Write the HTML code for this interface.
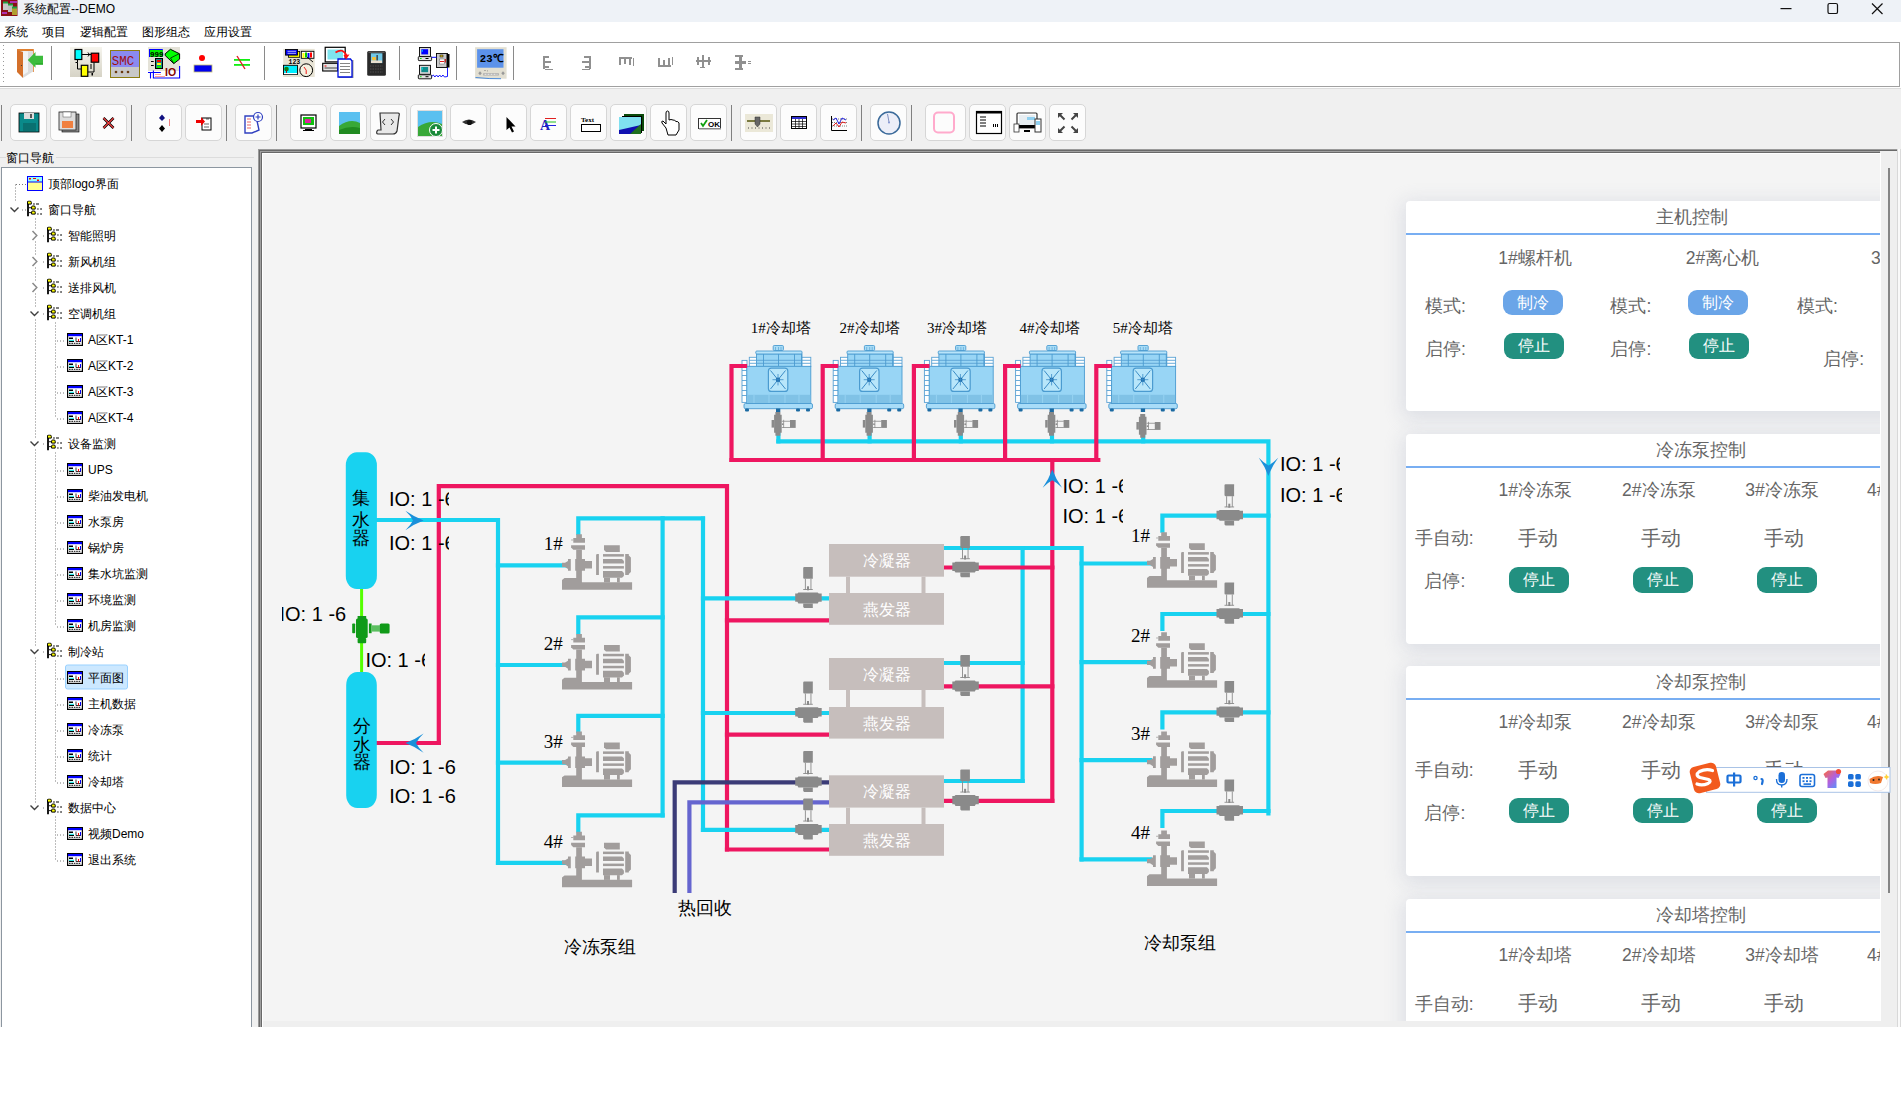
<!DOCTYPE html>
<html><head><meta charset="utf-8">
<style>
*{box-sizing:border-box}
html,body{margin:0;padding:0;width:1901px;height:1108px;overflow:hidden;background:#fff;font-family:"Liberation Sans",sans-serif;color:#000}
.a{position:absolute}
#title{left:0;top:0;width:1901px;height:22px;background:#eef2f7}
#menu{left:0;top:22px;width:1901px;height:20px;background:#fff;font-size:12px}
#menu span{position:absolute;top:2px;line-height:16px}
#tb1{left:0;top:42px;width:1900px;height:45px;background:#fff;border-top:1px solid #a0a0a0;border-bottom:1px solid #a0a0a0;border-right:1px solid #a0a0a0}
#main{left:0;top:87px;width:1901px;height:940px;background:#f0f0f0;border-top:1px solid #fff}
#main2{left:0;top:88px;width:1901px;height:1px;background:#dcdcdc}
.btn{position:absolute;top:104px;width:37px;height:37px;border:1px solid #d4d4d4;border-radius:4px;background:#fbfbfb}
.sep{position:absolute;width:1px;background:#8a8a8a}
#tree{left:1px;top:167px;width:251px;height:860px;background:#fff;border:1px solid #8c96a0;border-bottom:none}
#grp{left:0;top:157px;width:254px;height:1px;background:#dcdcdc}
.ti{position:absolute;font-size:12px;line-height:16px;white-space:nowrap;margin-top:0.7px;font-weight:500}
#canvas{left:258px;top:150px;width:1643px;height:877px;background:#f0f0f0}
.card{position:absolute;left:1406px;width:520px;background:#fff;border-radius:4px;box-shadow:0 4px 18px 4px rgba(195,200,212,0.45)}
.card .hd{position:absolute;left:0;top:0;width:474px;height:33px;border-bottom:2px solid #78aef2}
.ct{position:absolute;font-size:17px;color:#555;white-space:nowrap;line-height:20px}
.pill{position:absolute;width:60px;height:26px;border-radius:9px;color:#fff;font-size:16px;font-weight:500;text-align:center;line-height:26px}
.pb{background:#6aa5e8}
.pg{background:#229080}
.io{position:absolute;font-size:20px;line-height:20px;white-space:nowrap;overflow:hidden;color:#000}
</style></head><body>
<div id="title" class="a">
<svg class="a" style="left:1px;top:0" width="17" height="17" viewBox="0 0 17 17"><rect x="0" y="0" width="16.5" height="16" fill="#8a0f14"/><rect x="9" y="1" width="7" height="2" fill="#b030b0"/><rect x="1" y="12" width="5" height="2" fill="#b030b0"/><rect x="2" y="2" width="5" height="8" fill="#c8c8c8"/><rect x="2" y="1.5" width="5" height="2" fill="#20a040"/><rect x="7" y="4" width="5" height="8" fill="#c0c0c0"/><rect x="7" y="3.5" width="5" height="2" fill="#20a040"/><rect x="11" y="7" width="5" height="8" fill="#b0a030"/><rect x="11" y="6.5" width="5" height="2" fill="#20a040"/></svg>
<span class="a" style="left:23px;top:2px;font-size:12px;line-height:15px;color:#000">系统配置--DEMO</span>
<svg class="a" style="left:1778px;top:2px" width="120" height="14" viewBox="0 0 120 14"><rect x="2.5" y="6" width="11" height="1.2" fill="#111"/><rect x="50" y="1.5" width="9.5" height="10" rx="1.6" fill="none" stroke="#111" stroke-width="1.2"/><path d="M94 1.5 L104.5 12 M104.5 1.5 L94 12" stroke="#111" stroke-width="1.2"/></svg>
</div>
<div id="menu" class="a">
<span style="left:4px">系统</span><span style="left:42px">项目</span><span style="left:80px">逻辑配置</span><span style="left:142px">图形组态</span><span style="left:204px">应用设置</span>
</div>
<div id="tb1" class="a"></div>
<svg class="a" style="left:0;top:43px" width="760" height="42" viewBox="0 43 760 42">
<!-- grip -->
<g fill="#9a9a9a"><rect x="3" y="45" width="1" height="1"/><rect x="3" y="49" width="1" height="1"/><rect x="3" y="53" width="1" height="1"/><rect x="3" y="57" width="1" height="1"/><rect x="3" y="61" width="1" height="1"/><rect x="3" y="65" width="1" height="1"/><rect x="3" y="69" width="1" height="1"/><rect x="3" y="73" width="1" height="1"/><rect x="3" y="77" width="1" height="1"/><rect x="3" y="81" width="1" height="1"/></g>
<!-- door -->
<rect x="17" y="49" width="16.8" height="23" fill="#e08030"/><rect x="18.5" y="51" width="14.5" height="21" fill="#e4e4e4"/>
<path d="M23 52 L33 51.5 V71.5 L23 78Z" fill="#dcdcdc"/><path d="M23 51 L28 51.5 V72 L23 75Z" fill="#f2f2f2"/>
<path d="M17 50 L23 52 V78 L17 72Z" fill="#d4702a"/><circle cx="21.5" cy="65.5" r="0.6" fill="#333"/>
<path d="M27.8 60.1 L35.5 52 V55.8 H43 V64.6 H35.5 V67.7Z" fill="#3cbc3c"/><path d="M35.5 63.5 H43 V64.6 H35.5Z" fill="#1aa01a"/>
<rect x="51" y="46" width="1" height="34" fill="#8a8a8a"/>
<!-- icon1 -->
<defs><linearGradient id="ic1g" x1="0" y1="0" x2="0" y2="1"><stop offset="0" stop-color="#f6f5ee"/><stop offset="1" stop-color="#d6d3c6"/></linearGradient></defs>
<rect x="70" y="47" width="32" height="30" fill="url(#ic1g)"/>
<rect x="75" y="49.5" width="6.8" height="10" fill="#00ffff" stroke="#000" stroke-width="1.2"/>
<rect x="91.2" y="53.2" width="7.5" height="9" fill="#ff0000" stroke="#000" stroke-width="1.2"/>
<rect x="81.3" y="65.3" width="6.5" height="11" fill="#ffff00" stroke="#000" stroke-width="1.2"/>
<path d="M82 54.5 H91 M88 52.5 L89.5 54.5 L88 56.5 M77.5 60 V62.5 H75.5 M77.5 62.5 V69 H81 M94 62.5 V72 H88 M91 64 V69" stroke="#000" stroke-width="1" fill="none"/>
<rect x="91.5" y="73" width="1.5" height="2.5" fill="#000"/>
<!-- SMC -->
<rect x="110.5" y="50.5" width="29" height="27" fill="#c8c8c8" stroke="#8b7b10"/><rect x="111" y="51" width="28" height="16" fill="#8a8af0"/>
<text x="111.8" y="64.5" font-size="12" fill="#a01010" font-family="Liberation Mono" textLength="22.5" lengthAdjust="spacingAndGlyphs">SMC</text>
<circle cx="116" cy="72" r="1.3" fill="#6a3a10"/><circle cx="122" cy="72" r="1.3" fill="#6a3a10"/><circle cx="128" cy="72" r="1.3" fill="#6a3a10"/>
<!-- IO icon -->
<rect x="148" y="47" width="32" height="24" fill="#e4e2d8"/>
<rect x="149" y="49" width="13.8" height="8" fill="#0000ff"/><rect x="150" y="50" width="12.8" height="6.9" fill="#00ee00"/>
<text x="150" y="56.5" font-size="7.5" font-weight="bold" font-family="Liberation Mono" fill="#000">999</text>
<path d="M165.2 53.8 L170.4 49.3 L179.6 53.8 V59.1 L173.8 63.6 L165.2 55.5Z" fill="#00ff00" stroke="#000" stroke-width="1"/><path d="M170.5 58 L179 53.8 M170.5 58 L173.8 63.5" stroke="#000" stroke-width="0.7"/>
<rect x="155.5" y="58.5" width="7" height="10" fill="#1a8a8a" stroke="#000" stroke-width="1"/><rect x="157" y="60" width="4" height="2" fill="#f00"/><rect x="157" y="63" width="4" height="2" fill="#ff0"/><rect x="157" y="66" width="4" height="2" fill="#0e0"/>
<rect x="151" y="61" width="2.7" height="1" fill="#000"/><rect x="151" y="65" width="2.7" height="1" fill="#000"/>
<path d="M148 72.5 H160.8 M150.5 72.5 V78.6 M153.4 70.5 V78 H179.6 V66" stroke="#0000ff" stroke-width="1.1" fill="none"/>
<text x="165" y="76" font-size="10.5" font-family="Liberation Sans" fill="#800000" font-weight="bold">IO</text>
<g fill="#f00"><circle cx="156" cy="74.5" r="0.5"/><circle cx="158" cy="74.5" r="0.5"/><circle cx="160" cy="74.5" r="0.5"/><circle cx="156" cy="76.4" r="0.5"/><circle cx="158" cy="76.4" r="0.5"/><circle cx="160" cy="76.4" r="0.5"/><circle cx="162" cy="76.4" r="0.5"/><circle cx="164" cy="76.4" r="0.5"/></g>
<!-- red dot blue bar -->
<circle cx="202" cy="58" r="3" fill="#f00"/><rect x="194" y="65" width="18" height="7" fill="#0000ee" stroke="#c8c070" stroke-width="0.8"/>
<!-- green lines red slash -->
<rect x="234" y="59" width="16" height="1.8" fill="#11ee11"/><rect x="234" y="64" width="16" height="1.8" fill="#11ee11"/><path d="M237 56 L245 69" stroke="#e02020" stroke-width="1.4"/>
<rect x="264" y="46" width="1" height="34" fill="#8a8a8a"/>
<!-- icon 283 -->
<rect x="283.2" y="48.9" width="31.5" height="28.1" fill="#e8e4d6"/>
<rect x="288.4" y="51.5" width="11.3" height="5.8" fill="#ffff00" stroke="#000" stroke-width="0.8"/>
<rect x="285.5" y="49.5" width="12" height="5.6" fill="#0000ee" stroke="#000" stroke-width="0.9"/><path d="M287.5 51.3 H296 M287.5 53.3 H296" stroke="#fff" stroke-width="0.7"/>
<rect x="301.3" y="51.3" width="12.6" height="7" fill="#fff" stroke="#000" stroke-width="0.9"/><rect x="302.5" y="53" width="2" height="5" fill="#ff0"/><rect x="305" y="52.5" width="2" height="5" fill="#0c0"/><rect x="307.5" y="53" width="2" height="5" fill="#00f"/><rect x="310" y="52.5" width="2" height="5" fill="#f00"/>
<path d="M307 57 L313 62" stroke="#000" stroke-width="0.9"/>
<text x="288.5" y="63.8" font-size="6.5" font-weight="bold" font-family="Liberation Mono" fill="#000">123</text>
<rect x="283.5" y="65.3" width="14" height="9.2" fill="#00eeff" stroke="#000" stroke-width="0.9"/><circle cx="286.5" cy="69" r="2.3" fill="#108010"/><rect x="286" y="70" width="1" height="4" fill="#902020"/><rect x="284" y="73" width="13" height="1.2" fill="#fff"/>
<circle cx="306.2" cy="70.2" r="6.4" fill="#f4f0e0" stroke="#000" stroke-width="1"/><path d="M304 67 L306.2 70.2 V74" stroke="#e00" stroke-width="0.9" fill="none"/>
<!-- computer disk -->
<rect x="325.2" y="47.3" width="20" height="14.6" fill="#fff" stroke="#000" stroke-width="1.2"/><rect x="327.5" y="49.5" width="15.5" height="10" fill="#7ee4ee"/>
<rect x="322.7" y="63.3" width="15" height="7.7" fill="#e4e4e4" stroke="#000" stroke-width="1.1"/><rect x="324.5" y="65.5" width="2" height="1" fill="#e00"/><path d="M324.5 68 H337" stroke="#000" stroke-width="0.7"/>
<rect x="339" y="60" width="14.5" height="18" fill="#999"/>
<path d="M338 59 H350.5 L352 61 V77 H338Z" fill="#fff" stroke="#0010e0" stroke-width="1.3"/><path d="M340 63.5 H350 M340 66.5 H350 M340 69.5 H350 M340 72.5 H350" stroke="#333" stroke-width="0.6"/>
<path d="M335.5 52.5 Q343 47.5 346.5 55.5" stroke="#ff1010" stroke-width="1.8" fill="none"/><path d="M343.5 55 L349.5 54.5 L346 59.5Z" fill="#ff1010"/>
<!-- pda -->
<rect x="367.2" y="51" width="18.7" height="24.8" rx="1.5" fill="#2a2a2a"/><rect x="368.5" y="51.5" width="16" height="1.5" fill="#555"/>
<rect x="370.9" y="53.3" width="11.5" height="9.8" fill="#70c8e8"/><rect x="372" y="57" width="4" height="3.5" fill="#f0c040"/><rect x="376.5" y="55" width="1.3" height="7" fill="#333"/><rect x="371" y="60.5" width="11" height="2.5" fill="#e8e0d0"/>
<path d="M370 66 H383 M370 69 H383 M370 72 H383" stroke="#666" stroke-width="0.6" stroke-dasharray="1.5 1"/>
<rect x="399" y="46" width="1" height="34" fill="#8a8a8a"/>
<!-- network -->
<rect x="419.5" y="47.5" width="11" height="9" fill="#d8d8d8" stroke="#000" stroke-width="0.9"/><rect x="421.3" y="49.2" width="6.8" height="5.2" fill="#0000ff"/><rect x="421.8" y="49.8" width="0.8" height="2" fill="#0ff"/>
<rect x="418.3" y="56.6" width="13.3" height="4" rx="0.8" fill="#e4e4e4" stroke="#000" stroke-width="0.9"/><rect x="420" y="58" width="1.6" height="1" fill="#0d0"/><rect x="425.5" y="58" width="3" height="1" fill="#000"/>
<rect x="419.5" y="65.3" width="11" height="9" fill="#d8d8d8" stroke="#000" stroke-width="0.9"/><rect x="421.3" y="67" width="6.8" height="5.2" fill="#108c8c"/><rect x="421.8" y="67.6" width="0.8" height="2" fill="#0ff"/>
<rect x="418.3" y="74.8" width="13.3" height="4" rx="0.8" fill="#e4e4e4" stroke="#000" stroke-width="0.9"/><rect x="420" y="76.2" width="1.6" height="1" fill="#0d0"/><rect x="425.5" y="76.2" width="3" height="1" fill="#000"/>
<rect x="436.5" y="53.5" width="11" height="14" fill="#c8c8c8" stroke="#000" stroke-width="0.9"/><rect x="446.5" y="54" width="3" height="13.5" fill="#000"/><rect x="440" y="55" width="3" height="2" fill="#e0c020" stroke="#000" stroke-width="0.5"/>
<rect x="439.5" y="59" width="5" height="5" fill="#fff" stroke="#666" stroke-width="0.5"/><path d="M440 61.5 H444" stroke="#d00" stroke-width="0.9"/><rect x="444.8" y="59" width="1" height="3.5" fill="#c00"/>
<path d="M431.7 57.3 H436.5" stroke="#0000ff" stroke-width="1"/>
<path d="M431.7 76.5 L433.3 75 L434.9 77 L436.5 75 L438.1 77 L439.7 75 L441.3 77 L442.9 75 L444.5 77 L447.5 76.5 V67.7" stroke="#0000ff" stroke-width="0.9" fill="none"/>
<rect x="456" y="46" width="1" height="34" fill="#8a8a8a"/>
<!-- 23C -->
<rect x="475.1" y="47.2" width="31.5" height="31.5" fill="#e2dfd2"/><rect x="477.1" y="49.2" width="26.4" height="18.5" fill="#5c92ea"/>
<text x="479.8" y="62" font-size="11" font-weight="bold" fill="#000" font-family="Liberation Mono" textLength="23.4" lengthAdjust="spacingAndGlyphs">23℃</text>
<rect x="484.5" y="70" width="1" height="1" fill="#777"/><rect x="487" y="70.5" width="0.8" height="0.8" fill="#777"/>
<path d="M480 71.2 L481.8 73.2 L480 75.2 L478.3 73.2Z" fill="#999"/><path d="M503 71.2 L504.8 73.2 L503 75.2 L501.3 73.2Z" fill="#999"/>
<rect x="483.2" y="73.2" width="15.6" height="2.3" fill="#aaa"/><path d="M484.5 74.3 H497.5" stroke="#fff" stroke-width="0.8" stroke-dasharray="2 1"/>
<path d="M475.5 77.5 Q490 79 501 78.7" stroke="#4a8ad8" stroke-width="1" fill="none"/>
<rect x="513" y="46" width="1" height="34" fill="#8a8a8a"/>
<!-- align icons -->
<g fill="#909090">
<rect x="543" y="56" width="2" height="13"/><rect x="545" y="56" width="4" height="2"/><rect x="545" y="61" width="6" height="2"/><rect x="545" y="66" width="4" height="2"/><rect x="545" y="69" width="8" height="1"/>
<rect x="589" y="56" width="2" height="13"/><rect x="584" y="56" width="5" height="2"/><rect x="582" y="61" width="7" height="2"/><rect x="585" y="66" width="4" height="2"/><rect x="582" y="69" width="8" height="1"/>
<rect x="619" y="57" width="13" height="2"/><rect x="619" y="59" width="2" height="6"/><rect x="624" y="59" width="2" height="5"/><rect x="629" y="59" width="2" height="6"/><rect x="633" y="58" width="1" height="8"/>
<rect x="658" y="65" width="13" height="2"/><rect x="658" y="58" width="2" height="7"/><rect x="663" y="60" width="2" height="5"/><rect x="668" y="58" width="2" height="7"/><rect x="672" y="57" width="1" height="8"/>
<rect x="696" y="60" width="15" height="2"/><rect x="697" y="57" width="2" height="8"/><rect x="702" y="55" width="2" height="12"/><rect x="708" y="57" width="2" height="8"/><rect x="700" y="67" width="5" height="1"/>
<rect x="739" y="55" width="3" height="15"/><rect x="735" y="55" width="8" height="2"/><rect x="735" y="61" width="11" height="3"/><rect x="735" y="68" width="8" height="2"/><rect x="748" y="61" width="3" height="1"/><rect x="748" y="63" width="3" height="1"/>
</g>
</svg>
<div id="main" class="a"></div><div id="main2" class="a"></div>
<svg class="a" style="left:0;top:95px" width="1100" height="55" viewBox="0 95 1100 55">
<rect x="10.5" y="104.5" width="36" height="36" rx="4.5" fill="#fcfcfc" stroke="#d6d6d6"/><rect x="50.5" y="104.5" width="36" height="36" rx="4.5" fill="#fcfcfc" stroke="#d6d6d6"/><rect x="90.5" y="104.5" width="36" height="36" rx="4.5" fill="#fcfcfc" stroke="#d6d6d6"/><rect x="145.5" y="104.5" width="36" height="36" rx="4.5" fill="#fcfcfc" stroke="#d6d6d6"/><rect x="185.5" y="104.5" width="36" height="36" rx="4.5" fill="#fcfcfc" stroke="#d6d6d6"/><rect x="235.5" y="104.5" width="36" height="36" rx="4.5" fill="#fcfcfc" stroke="#d6d6d6"/><rect x="290.5" y="104.5" width="36" height="36" rx="4.5" fill="#fcfcfc" stroke="#d6d6d6"/><rect x="330.5" y="104.5" width="36" height="36" rx="4.5" fill="#fcfcfc" stroke="#d6d6d6"/><rect x="370.5" y="104.5" width="36" height="36" rx="4.5" fill="#fcfcfc" stroke="#d6d6d6"/><rect x="410.5" y="104.5" width="36" height="36" rx="4.5" fill="#fcfcfc" stroke="#d6d6d6"/><rect x="450.5" y="104.5" width="36" height="36" rx="4.5" fill="#fcfcfc" stroke="#d6d6d6"/><rect x="490.5" y="104.5" width="36" height="36" rx="4.5" fill="#fcfcfc" stroke="#d6d6d6"/><rect x="530.5" y="104.5" width="36" height="36" rx="4.5" fill="#fcfcfc" stroke="#d6d6d6"/><rect x="570.5" y="104.5" width="36" height="36" rx="4.5" fill="#fcfcfc" stroke="#d6d6d6"/><rect x="610.5" y="104.5" width="36" height="36" rx="4.5" fill="#fcfcfc" stroke="#d6d6d6"/><rect x="650.5" y="104.5" width="36" height="36" rx="4.5" fill="#fcfcfc" stroke="#d6d6d6"/><rect x="690.5" y="104.5" width="36" height="36" rx="4.5" fill="#fcfcfc" stroke="#d6d6d6"/><rect x="740.5" y="104.5" width="36" height="36" rx="4.5" fill="#fcfcfc" stroke="#d6d6d6"/><rect x="780.5" y="104.5" width="36" height="36" rx="4.5" fill="#fcfcfc" stroke="#d6d6d6"/><rect x="820.5" y="104.5" width="36" height="36" rx="4.5" fill="#fcfcfc" stroke="#d6d6d6"/><rect x="870.5" y="104.5" width="36" height="36" rx="4.5" fill="#fcfcfc" stroke="#d6d6d6"/><rect x="969.5" y="104.5" width="36" height="36" rx="4.5" fill="#fcfcfc" stroke="#d6d6d6"/><rect x="1009.5" y="104.5" width="36" height="36" rx="4.5" fill="#fcfcfc" stroke="#d6d6d6"/><rect x="1049.5" y="104.5" width="36" height="36" rx="4.5" fill="#fcfcfc" stroke="#d6d6d6"/><rect x="925.5" y="104.5" width="40" height="36" rx="4.5" fill="#fcfcfc" stroke="#d6d6d6"/><rect x="1.0" y="105" width="1" height="36" fill="#808080"/><rect x="131.0" y="105" width="1" height="36" fill="#808080"/><rect x="226.0" y="105" width="1" height="36" fill="#808080"/><rect x="276.0" y="105" width="1" height="36" fill="#808080"/><rect x="731.0" y="105" width="1" height="36" fill="#808080"/><rect x="861.0" y="105" width="1" height="36" fill="#808080"/><rect x="911.0" y="105" width="1" height="36" fill="#808080"/>
<!-- save -->
<rect x="19" y="113" width="20" height="19" fill="#0a8a8a" stroke="#000" stroke-width="0.8"/><rect x="24" y="113" width="10" height="6" fill="#ddd"/><rect x="30" y="114" width="2" height="4" fill="#555"/><rect x="23" y="123" width="13" height="8" fill="#0a7070"/>
<!-- save as -->
<rect x="62" y="114" width="17" height="18" fill="#888" stroke="#000" stroke-width="0.6"/><rect x="59" y="112" width="17" height="18" fill="#ddd" stroke="#222" stroke-width="0.8"/><rect x="62" y="121" width="11" height="7" fill="#f08040"/><rect x="63" y="112" width="8" height="5" fill="#fff" stroke="#555" stroke-width="0.5"/>
<!-- x -->
<path d="M103.5 118 L113.5 128 M113.5 118 L103.5 128" stroke="#000" stroke-width="2.6"/><path d="M103.5 118 L113.5 128 M113.5 118 L103.5 128" stroke="#f04040" stroke-width="1.2"/>
<!-- diamonds -->
<path d="M162 114.5 L165 118 L162 121 L159 118Z" fill="#101080"/><path d="M162 125 L165 128.5 L162 132 L159 128.5Z" fill="#000"/><rect x="169" y="119" width="1" height="7" fill="#f08080"/>
<!-- arrow doc -->
<rect x="202" y="118" width="9" height="12" fill="#fff" stroke="#000"/><path d="M206 119 H209 M204 124 H209 M204 127 H209" stroke="#000" stroke-width="0.6"/><path d="M196 120 H201 V117 L205 121.5 L201 126 V123 H196Z" fill="#ee0000"/>
<!-- doc plus -->
<path d="M245 116 H256 L259 130 L252 133 H245Z" fill="#fff" stroke="#3040c0" stroke-width="1.4"/><path d="M247 119 H251 M247 122 H251 M247 125 H251 M247 128 H251" stroke="#e02020" stroke-width="0.7"/><circle cx="258" cy="117" r="4.5" fill="#fff" stroke="#3040c0" stroke-width="1.2"/><path d="M258 114.5 V119.5 M255.5 117 H260.5" stroke="#3040c0" stroke-width="1.2"/>
<!-- monitor -->
<rect x="301" y="115" width="15" height="13" fill="#fff" stroke="#000" stroke-width="1.2"/><rect x="303" y="117" width="11" height="8" fill="#10c010"/><rect x="305" y="119" width="6" height="4" fill="#e020a0"/><rect x="305" y="129" width="7" height="1" fill="#000"/><rect x="303" y="130" width="11" height="1" fill="#000"/>
<!-- picture -->
<rect x="339" y="112" width="21" height="22" fill="#5ac0f0"/><path d="M339 126 Q350 118 360 123 V134 H339Z" fill="#38a838"/><path d="M339 130 Q350 125 360 128 V134 H339Z" fill="#208a20"/>
<!-- scroll code -->
<path d="M380 113 H398 Q400 113 399 116 L397 131 Q396 134 393 134 H378 Q376 134 377 131 L378 130 H381Z" fill="#e8e8e8" stroke="#333" stroke-width="1.2"/><path d="M385 119 L382.5 122 L385 125 M391 119 L393.5 122 L391 125" stroke="#333" fill="none" stroke-width="1"/>
<!-- picture plus -->
<rect x="417" y="110" width="26" height="27" fill="#ddd"/><rect x="418" y="111" width="24" height="25" fill="#5ac0f0"/><path d="M418 127 Q430 119 442 124 V136 H418Z" fill="#38a838"/><circle cx="436" cy="130" r="6.5" fill="#1a8a3a" stroke="#fff" stroke-width="1"/><path d="M436 126.5 V133.5 M432.5 130 H439.5" stroke="#fff" stroke-width="2"/>
<!-- eye -->
<path d="M462 122 Q469 117 476 122 Q469 127 462 122Z" fill="#333"/><circle cx="469.5" cy="122.5" r="2.6" fill="#111"/>
<!-- cursor -->
<path d="M506.5 117 L506.5 130 L509.5 127.5 L512 132.5 L514 131.5 L511.5 126.5 L515.5 126.5Z" fill="#000"/>
<!-- A text lines -->
<text x="540" y="130" font-size="14" font-family="Liberation Serif" fill="#2020c0" font-weight="bold">A</text><rect x="545" y="118" width="11" height="1" fill="#e02020"/><rect x="545" y="121.5" width="11" height="1" fill="#20c020"/><rect x="545" y="125" width="11" height="1" fill="#2020e0"/>
<!-- Text box -->
<text x="581" y="122" font-size="7" font-family="Liberation Serif" font-weight="bold" fill="#000">Text</text><rect x="581.5" y="124.5" width="19" height="7" fill="#fff" stroke="#000"/>
<!-- stacked pics -->
<rect x="624" y="114" width="20" height="17" fill="#0a4a0a"/><rect x="622" y="116" width="20" height="17" fill="#000"/><rect x="619" y="117" width="22" height="17" fill="#80e0f0"/><path d="M619 130 L641 125 V134 H619Z" fill="#1010b0"/><path d="M630 134 L641 124 V134Z" fill="#207020"/>
<!-- hand -->
<path d="M666 128 L662 123 Q661 121 663 121 L666 124 V113 Q666 111 667.5 111 Q669 111 669 113 V120 Q671 119 673 120 Q675 120 676 121.5 Q678 121 679 123 V130 L676 135 H668Z" fill="#fff" stroke="#000" stroke-width="1"/>
<!-- OK -->
<rect x="698.5" y="118.5" width="22" height="10" fill="#fff" stroke="#333"/><rect x="699" y="128" width="22" height="1.5" fill="#888"/><path d="M701 123 L703 126 L707 120" stroke="#10a010" stroke-width="1.8" fill="none"/><text x="708" y="127" font-size="8" font-family="Liberation Sans" font-weight="bold" fill="#000">OK</text>
<!-- slider -->
<rect x="745" y="114" width="28" height="18" fill="#ebe8d8"/><rect x="747" y="120" width="23" height="2" fill="#7a7a40"/><path d="M755 117 H760 V124 L757.5 127 L755 124Z" fill="#666" stroke="#333" stroke-width="0.5"/><path d="M748 128 H770" stroke="#444" stroke-dasharray="1 2.5"/>
<!-- grid -->
<rect x="791.5" y="116.5" width="15" height="12" fill="#fff" stroke="#000"/><rect x="792" y="117" width="14" height="2" fill="#3030d0"/><path d="M792 121.5 H806 M792 124 H806 M792 126.5 H806 M795.5 119 V128 M799 119 V128 M802.5 119 V128" stroke="#000" stroke-width="0.7"/>
<!-- chart -->
<path d="M831.5 116 V130.5 H847" stroke="#000" fill="none"/><path d="M832 119 H847 M832 122.5 H847 M832 126 H847" stroke="#000" stroke-width="0.5" stroke-dasharray="1 1"/><path d="M833 120 L836 118 L839 124 L842 118 L846 120" stroke="#2020e0" fill="none"/><path d="M833 126 L836 123 L839 127 L842 122 L846 123" stroke="#e02020" fill="none"/>
<!-- gauge -->
<circle cx="889" cy="123" r="11" fill="#eceef8" stroke="#3a6a9a" stroke-width="1.5"/><path d="M887.5 114 L889 122" stroke="#8090c0"/><circle cx="889" cy="122.5" r="1" fill="#8090d0"/>
<!-- pink rounded -->
<rect x="934" y="112.5" width="20" height="20" rx="4" fill="none" stroke="#ffaacc" stroke-width="2"/>
<!-- window list -->
<rect x="976.5" y="111.5" width="25" height="22" fill="#fff" stroke="#000" stroke-width="1.2"/><rect x="977" y="112" width="25" height="1.5" fill="#000"/><path d="M980 117 H986 M980 120 H986 M980 123 H986 M980 126 H986" stroke="#000"/><path d="M993.5 124 V127 M995.5 124 V127 M997.5 124 V127" stroke="#000" stroke-width="1"/>
<!-- devices -->
<rect x="1017" y="113" width="20" height="15" rx="1" fill="#fff" stroke="#333" stroke-width="1.2"/><rect x="1019" y="115" width="16" height="10" fill="#e8eef2"/><rect x="1027" y="117" width="8" height="3" fill="#90d0f0"/><rect x="1016" y="125" width="22" height="3" fill="#000"/><path d="M1024 131 H1030" stroke="#000" stroke-width="2"/>
<rect x="1035" y="119" width="6" height="13" fill="#fff" stroke="#333"/><rect x="1036" y="121" width="4" height="4" fill="#90d0f0"/><rect x="1014" y="124" width="5" height="8" fill="#fff" stroke="#333" stroke-width="0.8"/>
<!-- expand -->
<g stroke="#444" stroke-width="2" fill="none"><path d="M1059 114 L1064.5 119.5 M1077 114 L1071.5 119.5 M1059 132 L1064.5 126.5 M1077 132 L1071.5 126.5"/></g>
<g fill="#444"><path d="M1058 113 H1063 L1058 118Z"/><path d="M1078 113 H1073 L1078 118Z"/><path d="M1058 133 H1063 L1058 128Z"/><path d="M1078 133 H1073 L1078 128Z"/></g>
</svg>
<div id="grp" class="a"></div><div id="tree" class="a"></div>
<div class="a" style="left:6px;top:150px;font-size:12px;line-height:16px;background:#f0f0f0;padding-right:2px">窗口导航</div>
<svg class="a" style="left:0;top:0" width="252" height="1027" viewBox="0 0 252 1027">
<defs>
<symbol id="ifold" viewBox="0 0 16 16"><rect x="0.1" y="1" width="1.8" height="15" fill="#000"/><rect x="1.9" y="6.8" width="2.4" height="0.9" fill="#000"/><rect x="1.9" y="11.7" width="2.4" height="0.9" fill="#000"/>
<path d="M0.5 3.6 V1.6 Q0.5 0.5 1.8 0.5 H3 Q4.3 0.5 4.3 1.8 V3.6Z" fill="#ffff00" stroke="#000" stroke-width="1"/>
<path d="M4.6 8.6 V6.4 Q4.6 5.5 5.8 5.5 H7 Q8.2 5.5 8.2 6.6 V8.6Z" fill="#ffff00" stroke="#000" stroke-width="1"/>
<path d="M4.6 13.6 V11.4 Q4.6 10.5 5.8 10.5 H7 Q8.2 10.5 8.2 11.6 V13.6Z" fill="#ffff00" stroke="#000" stroke-width="1"/>
<g fill="#000"><rect x="6.1" y="3" width="1.7" height="1"/><rect x="9" y="3" width="3" height="1"/><rect x="10.2" y="8" width="1.4" height="1"/><rect x="13.1" y="8" width="1.9" height="1"/><rect x="10.2" y="13" width="1.4" height="1"/><rect x="13.1" y="13" width="1.9" height="1"/></g></symbol>
<symbol id="iwin" viewBox="0 0 16 13"><rect x="0.6" y="0.6" width="14.8" height="11.8" fill="#fff" stroke="#000" stroke-width="1.2"/><rect x="1" y="1" width="14" height="2.2" fill="#0000ff"/><rect x="2" y="4.5" width="4" height="1.5" fill="#000"/><rect x="2" y="6.8" width="5" height="1" fill="#00e0e0"/><rect x="2" y="8" width="5" height="1" fill="#000" /><path d="M9 4.5 V8.5 H14" stroke="#000" fill="none" stroke-width="0.8"/><rect x="11" y="6" width="1" height="2.5" fill="#f00"/><rect x="13" y="5" width="1" height="3.5" fill="#00f"/><path d="M2 10.3 H14" stroke="#000" stroke-dasharray="1.6 0.8"/></symbol>
<symbol id="ilogo" viewBox="0 0 16 15"><rect x="0.5" y="0.5" width="15" height="14" fill="#ffff90" stroke="#0000ff"/><rect x="1" y="1" width="14" height="5" fill="#90ffff"/><rect x="1" y="5.5" width="14" height="1" fill="#0000ff"/><rect x="2" y="2" width="2" height="1.5" fill="#f00"/><rect x="6" y="2" width="3" height="1" fill="#f00"/><rect x="10" y="3.5" width="2" height="1.5" fill="#f00"/></symbol>
</defs>
<g stroke="#7a7a7a" stroke-width="1" stroke-dasharray="1 2" fill="none">
<path d="M15.5 184.5 V201.5"/>
<path d="M16 184.5 H26"/>
<path d="M22 210.0 H26"/>
<path d="M35.5 218.5 V230.5"/>
<path d="M35.5 241.5 V256.5"/>
<path d="M35.5 267.5 V282.5"/>
<path d="M35.5 293.5 V308.5"/>
<path d="M35.5 319.5 V438.5"/>
<path d="M35.5 449.5 V646.5"/>
<path d="M35.5 657.5 V802.5"/>
<path d="M55.5 322.5 V418.5"/>
<path d="M55.5 452.5 V626.5"/>
<path d="M55.5 660.5 V782.5"/>
<path d="M55.5 816.5 V860.5"/>
</g>
<use href="#ilogo" x="27" y="176.0" width="16" height="15"/>
<use href="#ifold" x="27" y="200.5" width="16" height="16"/>
<path d="M10.5 207.5 L14.5 211.5 L18.5 207.5" stroke="#404040" stroke-width="1.4" fill="none"/>
<use href="#ifold" x="47" y="226.5" width="16" height="16"/>
<path d="M43 236.0 H46" stroke="#7a7a7a" stroke-dasharray="1 2"/>
<path d="M32.5 231.0 L36.8 235.5 L32.5 240.0" stroke="#8a8a8a" stroke-width="1.5" fill="none"/>
<use href="#ifold" x="47" y="252.5" width="16" height="16"/>
<path d="M43 262.0 H46" stroke="#7a7a7a" stroke-dasharray="1 2"/>
<path d="M32.5 257.0 L36.8 261.5 L32.5 266.0" stroke="#8a8a8a" stroke-width="1.5" fill="none"/>
<use href="#ifold" x="47" y="278.5" width="16" height="16"/>
<path d="M43 288.0 H46" stroke="#7a7a7a" stroke-dasharray="1 2"/>
<path d="M32.5 283.0 L36.8 287.5 L32.5 292.0" stroke="#8a8a8a" stroke-width="1.5" fill="none"/>
<use href="#ifold" x="47" y="304.5" width="16" height="16"/>
<path d="M43 314.0 H46" stroke="#7a7a7a" stroke-dasharray="1 2"/>
<path d="M30.5 311.5 L34.5 315.5 L38.5 311.5" stroke="#404040" stroke-width="1.4" fill="none"/>
<use href="#iwin" x="67" y="333.0" width="16" height="13"/>
<path d="M57 341.0 H66" stroke="#7a7a7a" stroke-dasharray="1 2"/>
<use href="#iwin" x="67" y="359.0" width="16" height="13"/>
<path d="M57 367.0 H66" stroke="#7a7a7a" stroke-dasharray="1 2"/>
<use href="#iwin" x="67" y="385.0" width="16" height="13"/>
<path d="M57 393.0 H66" stroke="#7a7a7a" stroke-dasharray="1 2"/>
<use href="#iwin" x="67" y="411.0" width="16" height="13"/>
<path d="M57 419.0 H66" stroke="#7a7a7a" stroke-dasharray="1 2"/>
<use href="#ifold" x="47" y="434.5" width="16" height="16"/>
<path d="M43 444.0 H46" stroke="#7a7a7a" stroke-dasharray="1 2"/>
<path d="M30.5 441.5 L34.5 445.5 L38.5 441.5" stroke="#404040" stroke-width="1.4" fill="none"/>
<use href="#iwin" x="67" y="463.0" width="16" height="13"/>
<path d="M57 471.0 H66" stroke="#7a7a7a" stroke-dasharray="1 2"/>
<use href="#iwin" x="67" y="489.0" width="16" height="13"/>
<path d="M57 497.0 H66" stroke="#7a7a7a" stroke-dasharray="1 2"/>
<use href="#iwin" x="67" y="515.0" width="16" height="13"/>
<path d="M57 523.0 H66" stroke="#7a7a7a" stroke-dasharray="1 2"/>
<use href="#iwin" x="67" y="541.0" width="16" height="13"/>
<path d="M57 549.0 H66" stroke="#7a7a7a" stroke-dasharray="1 2"/>
<use href="#iwin" x="67" y="567.0" width="16" height="13"/>
<path d="M57 575.0 H66" stroke="#7a7a7a" stroke-dasharray="1 2"/>
<use href="#iwin" x="67" y="593.0" width="16" height="13"/>
<path d="M57 601.0 H66" stroke="#7a7a7a" stroke-dasharray="1 2"/>
<use href="#iwin" x="67" y="619.0" width="16" height="13"/>
<path d="M57 627.0 H66" stroke="#7a7a7a" stroke-dasharray="1 2"/>
<use href="#ifold" x="47" y="642.5" width="16" height="16"/>
<path d="M43 652.0 H46" stroke="#7a7a7a" stroke-dasharray="1 2"/>
<path d="M30.5 649.5 L34.5 653.5 L38.5 649.5" stroke="#404040" stroke-width="1.4" fill="none"/>
<rect x="65.5" y="665.0" width="62" height="24" rx="2" fill="#cce8ff" stroke="#99d1ff"/>
<use href="#iwin" x="67" y="671.0" width="16" height="13"/>
<path d="M57 679.0 H66" stroke="#7a7a7a" stroke-dasharray="1 2"/>
<use href="#iwin" x="67" y="697.0" width="16" height="13"/>
<path d="M57 705.0 H66" stroke="#7a7a7a" stroke-dasharray="1 2"/>
<use href="#iwin" x="67" y="723.0" width="16" height="13"/>
<path d="M57 731.0 H66" stroke="#7a7a7a" stroke-dasharray="1 2"/>
<use href="#iwin" x="67" y="749.0" width="16" height="13"/>
<path d="M57 757.0 H66" stroke="#7a7a7a" stroke-dasharray="1 2"/>
<use href="#iwin" x="67" y="775.0" width="16" height="13"/>
<path d="M57 783.0 H66" stroke="#7a7a7a" stroke-dasharray="1 2"/>
<use href="#ifold" x="47" y="798.5" width="16" height="16"/>
<path d="M43 808.0 H46" stroke="#7a7a7a" stroke-dasharray="1 2"/>
<path d="M30.5 805.5 L34.5 809.5 L38.5 805.5" stroke="#404040" stroke-width="1.4" fill="none"/>
<use href="#iwin" x="67" y="827.0" width="16" height="13"/>
<path d="M57 835.0 H66" stroke="#7a7a7a" stroke-dasharray="1 2"/>
<use href="#iwin" x="67" y="853.0" width="16" height="13"/>
<path d="M57 861.0 H66" stroke="#7a7a7a" stroke-dasharray="1 2"/>
</svg>
<div class="ti" style="left:48px;top:175.0px">顶部logo界面</div>
<div class="ti" style="left:48px;top:201.0px">窗口导航</div>
<div class="ti" style="left:68px;top:227.0px">智能照明</div>
<div class="ti" style="left:68px;top:253.0px">新风机组</div>
<div class="ti" style="left:68px;top:279.0px">送排风机</div>
<div class="ti" style="left:68px;top:305.0px">空调机组</div>
<div class="ti" style="left:88px;top:331.0px">A区KT-1</div>
<div class="ti" style="left:88px;top:357.0px">A区KT-2</div>
<div class="ti" style="left:88px;top:383.0px">A区KT-3</div>
<div class="ti" style="left:88px;top:409.0px">A区KT-4</div>
<div class="ti" style="left:68px;top:435.0px">设备监测</div>
<div class="ti" style="left:88px;top:461.0px">UPS</div>
<div class="ti" style="left:88px;top:487.0px">柴油发电机</div>
<div class="ti" style="left:88px;top:513.0px">水泵房</div>
<div class="ti" style="left:88px;top:539.0px">锅炉房</div>
<div class="ti" style="left:88px;top:565.0px">集水坑监测</div>
<div class="ti" style="left:88px;top:591.0px">环境监测</div>
<div class="ti" style="left:88px;top:617.0px">机房监测</div>
<div class="ti" style="left:68px;top:643.0px">制冷站</div>
<div class="ti" style="left:88px;top:669.0px">平面图</div>
<div class="ti" style="left:88px;top:695.0px">主机数据</div>
<div class="ti" style="left:88px;top:721.0px">冷冻泵</div>
<div class="ti" style="left:88px;top:747.0px">统计</div>
<div class="ti" style="left:88px;top:773.0px">冷却塔</div>
<div class="ti" style="left:68px;top:799.0px">数据中心</div>
<div class="ti" style="left:88px;top:825.0px">视频Demo</div>
<div class="ti" style="left:88px;top:851.0px">退出系统</div>

<div class="a" style="left:258px;top:149px;width:1643px;height:878px;background:#f0f0f0"></div>
<svg class="a" style="left:258px;top:149px" width="1643" height="878" viewBox="258 149 1643 878">
<rect x="258" y="149" width="1640" height="1" fill="#9a9a9a"/>
<rect x="258" y="149" width="1" height="878" fill="#9a9a9a"/>
<rect x="259" y="150" width="1639" height="1" fill="#696969"/>
<rect x="259" y="150" width="1" height="877" fill="#696969"/>
<rect x="260" y="151" width="1620" height="1" fill="#a0a0a0"/>
<rect x="260" y="151" width="1" height="876" fill="#a0a0a0"/>
<rect x="261" y="152" width="1619" height="1" fill="#696969"/>
<rect x="261" y="152" width="1" height="875" fill="#696969"/>
<rect x="262" y="153" width="1618" height="1" fill="#fff"/>
<rect x="262" y="153" width="1" height="874" fill="#fff"/>
<rect x="1880" y="153" width="1" height="868" fill="#fff"/>
<rect x="1881" y="151" width="16" height="876" fill="#efefef"/>
<rect x="1888" y="168" width="2" height="725" fill="#858585"/>
<rect x="1897" y="149" width="1" height="878" fill="#d8d8d8"/>
<rect x="1898" y="149" width="2" height="878" fill="#fafafa"/>
<rect x="1900" y="149" width="1" height="878" fill="#dadada"/>
<rect x="263" y="1021" width="1618" height="6" fill="#efefef"/>
</svg>
<div class="a" id="content" style="left:263px;top:154px;width:1617px;height:867px;background:#f4f4f4;overflow:hidden">
<div class="a" style="left:-263px;top:-154px;width:1901px;height:1108px">
<svg class="a" style="left:0;top:0" width="1901" height="1108" viewBox="0 0 1901 1108">
<defs>
<symbol id="pump" viewBox="0 0 71 56" overflow="visible">
<g fill="#a19d9c">
<path d="M14.2 0.2 H19.9 V4 H23 V8.7 H11.3 V4 H14.2Z"/>
<rect x="9.1" y="5.6" width="2.2" height="0.8"/>
<path d="M9.1 11.2 H23 V15.7 H11.3 L9.1 13.5Z"/>
<path d="M14.2 15.7 H19.9 V25.1 H23 V27 H30 V34.6 H23 V36.8 H19.9 V48.2 H70.1 V55.8 H0 V46 L2.5 44.1 H14.2 V36.8 H13.2 V25.1 H14.2Z"/>
<path d="M6 25.1 H8.8 V36.8 H6 V35 L3 33 H0 V28.8 H3 L6 27Z"/>
<path d="M34.1 21 Q34.1 20 35.5 20 H36.9 V41 H34.1Z"/>
<rect x="41" y="20.1" width="20.9" height="2.5"/>
<path d="M41 25.1 H60 L61.9 27 V29.6 H41Z"/>
<rect x="41" y="32.1" width="20.9" height="2.5"/>
<path d="M41 37.1 H60 L61.9 39 V41.9 L60 43.8 H41Z"/>
<path d="M42 11.2 H57.8 V17.9 H44 L42 16Z"/>
<rect x="42" y="43.6" width="6" height="4.8"/>
<rect x="55" y="43.6" width="2.8" height="4.8"/>
<path d="M63.2 20 H66.8 V21.5 L68.9 23.5 V38 L66.8 40 V41 H63.2Z"/>
</g></symbol>
<symbol id="valveA" viewBox="-15 -32 30 44" overflow="visible">
<g fill="#8a8a8a">
<path d="M-4.7 -30.3 Q-4.7 -31.4 -3.6 -31.4 H4.9 V-19.5 H-3.6 Q-4.7 -19.5 -4.7 -20.6Z"/>
<rect x="-3" y="-19.5" width="0.9" height="10.8"/><rect x="2.6" y="-19.5" width="0.9" height="10.8"/>
<rect x="-4.7" y="-9.2" width="9.6" height="0.9"/><rect x="-0.9" y="-12" width="2" height="4"/>
<path d="M-12.7 -4.9 H-10.5 L-9.5 -5.7 H9.8 L10.8 -4.9 H13.8 V3.5 H10.8 L9.8 5.1 H-9.5 L-10.5 3.5 H-12.7Z"/>
<path d="M-4.7 5.1 H4.9 V9.7 H-3.7 L-4.7 8.7Z"/>
</g></symbol>
<symbol id="valveB" viewBox="-10 -13 20 26" overflow="visible">
<g fill="#8a8a8a">
<path d="M-2.5 -11.9 H2.5 V-9 H3.8 V-3.5 L3.8 3.5 V9 H2.5 V11.9 H-2.5 V9 H-3.8 V-9 H-2.5Z"/>
<rect x="-6.3" y="-3.8" width="2.5" height="7.6"/>
<rect x="3.8" y="-3" width="8.5" height="0.8"/><rect x="3.8" y="3.4" width="8.5" height="0.8"/>
<rect x="5.4" y="-4" width="0.8" height="8.2"/><circle cx="4.9" cy="0.4" r="0.9"/>
<rect x="12.1" y="-3.8" width="5.7" height="7.9"/>
</g></symbol>
<symbol id="tower" viewBox="0 0 72 68" overflow="visible">
<rect x="32.2" y="0.5" width="10.2" height="5" rx="1" fill="#a8dcf6" stroke="#4b9bd0" stroke-width="0.9"/>
<path d="M34.5 2 V5 M37.5 2 V5 M40 2 V5" stroke="#4b9bd0" stroke-width="0.6"/>
<rect x="1" y="15.4" width="5" height="42" fill="#fff" stroke="#5aa2d4" stroke-width="0.9"/>
<path d="M1 20.5 H6 M1 25.5 H6 M1 30.5 H6 M1 35.5 H6 M1 40.5 H6 M1 45.5 H6 M1 50.5 H6" stroke="#5aa2d4" stroke-width="0.9"/>
<rect x="8.3" y="12.3" width="61.5" height="9.3" fill="#fff" stroke="#5aa2d4" stroke-width="0.9"/>
<rect x="15.5" y="8.9" width="45.5" height="12.7" fill="#98d5f5" stroke="#4b9bd0" stroke-width="0.9"/>
<path d="M8.3 15.3 H69.8 M8.3 18.3 H69.8" stroke="#5aa2d4" stroke-width="0.9"/>
<path d="M22.5 9 V21.5 M37.5 9 V21.5 M53.5 9 V21.5 M60.5 9 V21.5" stroke="#4b9bd0" stroke-width="0.9"/>
<rect x="14.8" y="6" width="46.2" height="3" rx="1" fill="#b8e4fa" stroke="#4b9bd0" stroke-width="0.9"/>
<rect x="5.8" y="21.3" width="64" height="37.2" fill="#98d5f5" stroke="#4b9bd0" stroke-width="0.9"/>
<rect x="6.3" y="49.8" width="63" height="8.2" fill="#80c2e6"/>
<path d="M13 50 V58 M28 50 V58 M44 50 V58 M58 50 V58" stroke="#9ad6f4" stroke-width="0.8"/>
<rect x="27.4" y="23.2" width="19.4" height="23.2" rx="3" fill="#b8e6fa" stroke="#4b9bd0" stroke-width="1.2"/>
<path d="M29.5 25.5 L44.5 44 M44.5 25.5 L29.5 44" stroke="#3a8cc6" stroke-width="1"/>
<circle cx="37" cy="34.7" r="2.2" fill="#1a6aaa"/>
<path d="M37 29 V40.4 M31.5 34.7 H42.5" stroke="#3a8cc6" stroke-width="0.8"/>
<rect x="3" y="58.5" width="68.5" height="5.2" rx="1.5" fill="#a8dcf8" stroke="#4b9bd0" stroke-width="0.9"/>
<g fill="#1b6aa2"><rect x="4" y="63.5" width="4" height="3" rx="1"/><rect x="55" y="63.5" width="4" height="3" rx="1"/><rect x="65" y="63.5" width="4" height="3" rx="1"/><rect x="35" y="63.5" width="4.3" height="3.5"/></g>
</symbol>
<symbol id="arrow" viewBox="-16 -10 18 20" overflow="visible">
<path d="M0 0 L-16.2 -8.7 L-10.8 0 L-16.2 9.7Z" fill="#1f8fdc"/>
</symbol>
</defs>
<path d="M778.4 433 L778.4 441.3" stroke="#18d2f0" stroke-width="4.2" fill="none" stroke-linecap="square" stroke-linejoin="miter"/>
<path d="M869.6 433 L869.6 441.3" stroke="#18d2f0" stroke-width="4.2" fill="none" stroke-linecap="square" stroke-linejoin="miter"/>
<path d="M960.8 433 L960.8 441.3" stroke="#18d2f0" stroke-width="4.2" fill="none" stroke-linecap="square" stroke-linejoin="miter"/>
<path d="M1052.0 433 L1052.0 441.3" stroke="#18d2f0" stroke-width="4.2" fill="none" stroke-linecap="square" stroke-linejoin="miter"/>
<path d="M1143.2 433 L1143.2 441.3" stroke="#18d2f0" stroke-width="4.2" fill="none" stroke-linecap="square" stroke-linejoin="miter"/>
<path d="M731.5 460 L1098.3 460" stroke="#ee1660" stroke-width="4.2" fill="none" stroke-linecap="square" stroke-linejoin="miter"/>
<path d="M778.4 441.3 L1268.4 441.3 L1268.4 813.3" stroke="#18d2f0" stroke-width="4.2" fill="none" stroke-linecap="square" stroke-linejoin="miter"/>
<use href="#tower" x="741.0" y="345" width="72" height="68"/>
<path d="M745.0 366 L731.5 366 L731.5 460" stroke="#ee1660" stroke-width="4.2" fill="none" stroke-linecap="square" stroke-linejoin="miter"/>
<use href="#valveB" x="767.9" y="410.8" width="20" height="26"/>
<use href="#tower" x="832.2" y="345" width="72" height="68"/>
<path d="M836.2 366 L822.7 366 L822.7 460" stroke="#ee1660" stroke-width="4.2" fill="none" stroke-linecap="square" stroke-linejoin="miter"/>
<use href="#valveB" x="859.1" y="410.8" width="20" height="26"/>
<use href="#tower" x="923.4" y="345" width="72" height="68"/>
<path d="M927.4 366 L913.9 366 L913.9 460" stroke="#ee1660" stroke-width="4.2" fill="none" stroke-linecap="square" stroke-linejoin="miter"/>
<use href="#valveB" x="950.3" y="410.8" width="20" height="26"/>
<use href="#tower" x="1014.6" y="345" width="72" height="68"/>
<path d="M1018.6 366 L1005.1 366 L1005.1 460" stroke="#ee1660" stroke-width="4.2" fill="none" stroke-linecap="square" stroke-linejoin="miter"/>
<use href="#valveB" x="1041.5" y="410.8" width="20" height="26"/>
<use href="#tower" x="1105.8" y="345" width="72" height="68"/>
<path d="M1109.8 366 L1096.3 366 L1096.3 460" stroke="#ee1660" stroke-width="4.2" fill="none" stroke-linecap="square" stroke-linejoin="miter"/>
<use href="#valveB" x="1132.7" y="412.8" width="20" height="26"/>
<path d="M1052.3 460 L1052.3 800.8" stroke="#ee1660" stroke-width="4.2" fill="none" stroke-linecap="square" stroke-linejoin="miter"/>
<path d="M944 548 L1081.6 548 L1081.6 859.3" stroke="#18d2f0" stroke-width="4.2" fill="none" stroke-linecap="square" stroke-linejoin="miter"/>
<path d="M1022.6 548 L1022.6 781" stroke="#18d2f0" stroke-width="4.2" fill="none" stroke-linecap="square" stroke-linejoin="miter"/>
<path d="M944 663 L1022.6 663" stroke="#18d2f0" stroke-width="4.2" fill="none" stroke-linecap="square" stroke-linejoin="miter"/>
<path d="M944 781 L1022.6 781" stroke="#18d2f0" stroke-width="4.2" fill="none" stroke-linecap="square" stroke-linejoin="miter"/>
<path d="M944 567.5 L1052.3 567.5" stroke="#ee1660" stroke-width="4.2" fill="none" stroke-linecap="square" stroke-linejoin="miter"/>
<path d="M944 686.3 L1052.3 686.3" stroke="#ee1660" stroke-width="4.2" fill="none" stroke-linecap="square" stroke-linejoin="miter"/>
<path d="M944 800.8 L1052.3 800.8" stroke="#ee1660" stroke-width="4.2" fill="none" stroke-linecap="square" stroke-linejoin="miter"/>
<path d="M438.8 743 L438.8 486.2 L727 486.2 L727 849.5" stroke="#ee1660" stroke-width="4.2" fill="none" stroke-linecap="square" stroke-linejoin="miter"/>
<path d="M377 743 L438.8 743" stroke="#ee1660" stroke-width="4.2" fill="none" stroke-linecap="square" stroke-linejoin="miter"/>
<path d="M727 620.3 L829 620.3" stroke="#ee1660" stroke-width="4.2" fill="none" stroke-linecap="square" stroke-linejoin="miter"/>
<path d="M727 734.6 L829 734.6" stroke="#ee1660" stroke-width="4.2" fill="none" stroke-linecap="square" stroke-linejoin="miter"/>
<path d="M727 849.5 L829 849.5" stroke="#ee1660" stroke-width="4.2" fill="none" stroke-linecap="square" stroke-linejoin="miter"/>
<path d="M377 520 L498 520 L498 862.8" stroke="#18d2f0" stroke-width="4.2" fill="none" stroke-linecap="square" stroke-linejoin="miter"/>
<path d="M703 518.5 L703 829.8" stroke="#18d2f0" stroke-width="4.2" fill="none" stroke-linecap="square" stroke-linejoin="miter"/>
<path d="M703 598.3 L829 598.3" stroke="#18d2f0" stroke-width="4.2" fill="none" stroke-linecap="square" stroke-linejoin="miter"/>
<path d="M703 713 L829 713" stroke="#18d2f0" stroke-width="4.2" fill="none" stroke-linecap="square" stroke-linejoin="miter"/>
<path d="M703 829.8 L829 829.8" stroke="#18d2f0" stroke-width="4.2" fill="none" stroke-linecap="square" stroke-linejoin="miter"/>
<path d="M578.3 533 L578.3 518.4 L703 518.4" stroke="#18d2f0" stroke-width="4.2" fill="none" stroke-linecap="square" stroke-linejoin="miter"/>
<path d="M662.6 518.4 L662.6 815.4" stroke="#18d2f0" stroke-width="4.2" fill="none" stroke-linecap="square" stroke-linejoin="miter"/>
<path d="M674.7 891 L674.7 782.3 L829 782.3" stroke="#3b3b77" stroke-width="4.2" fill="none" stroke-linecap="square" stroke-linejoin="miter"/>
<path d="M689.4 891 L689.4 802.4 L829 802.4" stroke="#6565cf" stroke-width="4.2" fill="none" stroke-linecap="square" stroke-linejoin="miter"/>
<path d="M361.6 589 V672" stroke="#55ff00" stroke-width="3"/>
<path d="M498 565.3 L565 565.3" stroke="#18d2f0" stroke-width="4.2" fill="none" stroke-linecap="square" stroke-linejoin="miter"/>
<path d="M578.3 632.3 L578.3 617.3 L662.6 617.3" stroke="#18d2f0" stroke-width="4.2" fill="none" stroke-linecap="square" stroke-linejoin="miter"/>
<path d="M498 665 L565 665" stroke="#18d2f0" stroke-width="4.2" fill="none" stroke-linecap="square" stroke-linejoin="miter"/>
<path d="M578.3 730.8 L578.3 715.8 L662.6 715.8" stroke="#18d2f0" stroke-width="4.2" fill="none" stroke-linecap="square" stroke-linejoin="miter"/>
<path d="M498 762.6 L565 762.6" stroke="#18d2f0" stroke-width="4.2" fill="none" stroke-linecap="square" stroke-linejoin="miter"/>
<path d="M578.3 830.4 L578.3 815.4 L662.6 815.4" stroke="#18d2f0" stroke-width="4.2" fill="none" stroke-linecap="square" stroke-linejoin="miter"/>
<path d="M498 862.8 L565 862.8" stroke="#18d2f0" stroke-width="4.2" fill="none" stroke-linecap="square" stroke-linejoin="miter"/>
<path d="M1162.4 530.7 L1162.4 515.7 L1268.4 515.7" stroke="#18d2f0" stroke-width="4.2" fill="none" stroke-linecap="square" stroke-linejoin="miter"/>
<path d="M1081.6 563.5 L1150 563.5" stroke="#18d2f0" stroke-width="4.2" fill="none" stroke-linecap="square" stroke-linejoin="miter"/>
<path d="M1162.4 629 L1162.4 614 L1268.4 614" stroke="#18d2f0" stroke-width="4.2" fill="none" stroke-linecap="square" stroke-linejoin="miter"/>
<path d="M1081.6 662.2 L1150 662.2" stroke="#18d2f0" stroke-width="4.2" fill="none" stroke-linecap="square" stroke-linejoin="miter"/>
<path d="M1162.4 727.3 L1162.4 712.3 L1268.4 712.3" stroke="#18d2f0" stroke-width="4.2" fill="none" stroke-linecap="square" stroke-linejoin="miter"/>
<path d="M1081.6 760.2 L1150 760.2" stroke="#18d2f0" stroke-width="4.2" fill="none" stroke-linecap="square" stroke-linejoin="miter"/>
<path d="M1162.4 826 L1162.4 811 L1268.4 811" stroke="#18d2f0" stroke-width="4.2" fill="none" stroke-linecap="square" stroke-linejoin="miter"/>
<path d="M1081.6 859.3 L1150 859.3" stroke="#18d2f0" stroke-width="4.2" fill="none" stroke-linecap="square" stroke-linejoin="miter"/>
<use href="#pump" x="562" y="534.0" width="71" height="56"/>
<use href="#pump" x="1147" y="532" width="71" height="56"/>
<use href="#valveA" x="1214.2" y="483.70000000000005" width="30" height="44"/>
<use href="#pump" x="562" y="633.7" width="71" height="56"/>
<use href="#pump" x="1147" y="632" width="71" height="56"/>
<use href="#valveA" x="1214.2" y="582" width="30" height="44"/>
<use href="#pump" x="562" y="731.3000000000001" width="71" height="56"/>
<use href="#pump" x="1147" y="731.2" width="71" height="56"/>
<use href="#valveA" x="1214.2" y="680.3" width="30" height="44"/>
<use href="#pump" x="562" y="831.5" width="71" height="56"/>
<use href="#pump" x="1147" y="830.2" width="71" height="56"/>
<use href="#valveA" x="1214.2" y="779" width="30" height="44"/>
<rect x="829" y="544" width="115" height="32.700000000000045" fill="#c6bebc"/>
<rect x="829" y="593" width="115" height="31.799999999999955" fill="#c6bebc"/>
<rect x="846" y="576.7" width="4" height="16.299999999999955" fill="#c6bebc"/>
<rect x="921.5" y="576.7" width="4" height="16.299999999999955" fill="#c6bebc"/>
<rect x="829" y="658" width="115" height="32" fill="#c6bebc"/>
<rect x="829" y="707" width="115" height="31.600000000000023" fill="#c6bebc"/>
<rect x="846" y="690" width="4" height="17" fill="#c6bebc"/>
<rect x="921.5" y="690" width="4" height="17" fill="#c6bebc"/>
<rect x="829" y="775.3" width="115" height="32.30000000000007" fill="#c6bebc"/>
<rect x="829" y="824" width="115" height="31.799999999999955" fill="#c6bebc"/>
<rect x="846" y="807.6" width="4" height="16.399999999999977" fill="#c6bebc"/>
<rect x="921.5" y="807.6" width="4" height="16.399999999999977" fill="#c6bebc"/>
<use href="#valveA" x="792.9" y="566.3" width="30" height="44"/>
<use href="#valveA" x="792.9" y="681" width="30" height="44"/>
<use href="#valveA" x="792.9" y="797.8" width="30" height="44"/>
<use href="#valveA" x="792.9" y="750.3" width="30" height="44"/>
<use href="#valveA" x="950" y="535.5" width="30" height="44"/>
<use href="#valveA" x="950" y="654.3" width="30" height="44"/>
<use href="#valveA" x="950" y="768.8" width="30" height="44"/>
<path d="M423.6 520.4 Q414.6 517.2 405.4 510.8 Q410.8 515.9 413.0 520.4 Q410.8 524.9 405.4 530.2 Q414.6 523.6 423.6 520.4Z" fill="#1a90da"/>
<path d="M405.4 743.0 Q414.4 739.8 423.6 733.4 Q418.2 738.5 416.0 743.0 Q418.2 747.5 423.6 752.8 Q414.4 746.2 405.4 743.0Z" fill="#1a90da"/>
<path d="M1052.3 469.6 Q1049.1 478.6 1042.7 487.8 Q1047.8 482.4 1052.3 480.2 Q1056.8 482.4 1062.1 487.8 Q1055.5 478.6 1052.3 469.6Z" fill="#1a90da"/>
<path d="M1268.4 476.0 Q1265.2 467.0 1258.8 457.8 Q1263.9 463.2 1268.4 465.4 Q1272.9 463.2 1278.2 457.8 Q1271.6 467.0 1268.4 476.0Z" fill="#1a90da"/>
<rect x="345.8" y="452.3" width="31.1" height="136.7" rx="11" ry="13" fill="#18d2f0"/>
<rect x="346.2" y="672" width="30.6" height="136" rx="11" ry="13" fill="#18d2f0"/>
<g fill="#109a18"><rect x="357.6" y="616" width="8.6" height="3"/><rect x="356" y="618.5" width="11.7" height="19.5" rx="1.5"/><rect x="357.6" y="638" width="8.6" height="5.3" rx="1"/>
<rect x="352.2" y="623.5" width="3" height="9.7" rx="0.8"/><rect x="368.9" y="623.5" width="2.7" height="9.7"/><rect x="371.6" y="625.3" width="8.2" height="6.3" fill="#5cbf60"/><rect x="379.7" y="623.5" width="9.9" height="9.9" rx="1.5"/></g>
<text x="780.7" y="332.5" font-size="15" fill="#000" text-anchor="middle" font-family="Liberation Serif" >1#冷却塔</text>
<text x="869.6" y="332.5" font-size="15" fill="#000" text-anchor="middle" font-family="Liberation Serif" >2#冷却塔</text>
<text x="956.9" y="332.5" font-size="15" fill="#000" text-anchor="middle" font-family="Liberation Serif" >3#冷却塔</text>
<text x="1049.5" y="332.5" font-size="15" fill="#000" text-anchor="middle" font-family="Liberation Serif" >4#冷却塔</text>
<text x="1142.8" y="332.5" font-size="15" fill="#000" text-anchor="middle" font-family="Liberation Serif" >5#冷却塔</text>
<text x="553.2" y="549.8" font-size="19" fill="#000" text-anchor="middle" font-family="Liberation Serif" >1#</text>
<text x="553.2" y="649.5" font-size="19" fill="#000" text-anchor="middle" font-family="Liberation Serif" >2#</text>
<text x="553.2" y="747.5" font-size="19" fill="#000" text-anchor="middle" font-family="Liberation Serif" >3#</text>
<text x="553.2" y="847.5" font-size="19" fill="#000" text-anchor="middle" font-family="Liberation Serif" >4#</text>
<text x="1140.5" y="542.0" font-size="19" fill="#000" text-anchor="middle" font-family="Liberation Serif" >1#</text>
<text x="1140.5" y="641.7" font-size="19" fill="#000" text-anchor="middle" font-family="Liberation Serif" >2#</text>
<text x="1140.5" y="739.5" font-size="19" fill="#000" text-anchor="middle" font-family="Liberation Serif" >3#</text>
<text x="1140.5" y="839.0" font-size="19" fill="#000" text-anchor="middle" font-family="Liberation Serif" >4#</text>
<text x="886.5" y="566.35" font-size="16" fill="#ffffff" text-anchor="middle" font-family="Liberation Serif" >冷凝器</text>
<text x="886.5" y="614.9" font-size="16" fill="#ffffff" text-anchor="middle" font-family="Liberation Serif" >燕发器</text>
<text x="886.5" y="680.0" font-size="16" fill="#ffffff" text-anchor="middle" font-family="Liberation Serif" >冷凝器</text>
<text x="886.5" y="728.8" font-size="16" fill="#ffffff" text-anchor="middle" font-family="Liberation Serif" >燕发器</text>
<text x="886.5" y="797.45" font-size="16" fill="#ffffff" text-anchor="middle" font-family="Liberation Serif" >冷凝器</text>
<text x="886.5" y="845.9" font-size="16" fill="#ffffff" text-anchor="middle" font-family="Liberation Serif" >燕发器</text>
<text x="705" y="913.5" font-size="18" fill="#000" text-anchor="middle" font-family="Liberation Serif" >热回收</text>
<text x="599.8" y="953" font-size="18" fill="#000" text-anchor="middle" font-family="Liberation Serif" >冷冻泵组</text>
<text x="1180" y="949" font-size="18" fill="#000" text-anchor="middle" font-family="Liberation Serif" >冷却泵组</text>
<text x="361.3" y="504.3" font-size="18" fill="#000" text-anchor="middle" font-family="Liberation Sans" >集</text>
<text x="361.3" y="525.9" font-size="18" fill="#000" text-anchor="middle" font-family="Liberation Sans" >水</text>
<text x="361.3" y="544.3" font-size="18" fill="#000" text-anchor="middle" font-family="Liberation Sans" >器</text>
<text x="361.5" y="732.1" font-size="18" fill="#000" text-anchor="middle" font-family="Liberation Sans" >分</text>
<text x="361.5" y="750.5" font-size="18" fill="#000" text-anchor="middle" font-family="Liberation Sans" >水</text>
<text x="361.5" y="768.0" font-size="18" fill="#000" text-anchor="middle" font-family="Liberation Sans" >器</text>
</svg>
<div class="io" style="left:389px;top:488.6px;width:60px;">IO: 1 -6</div><div class="io" style="left:389px;top:533.4px;width:60px;">IO: 1 -6</div><div class="io" style="left:282.0px;top:604.4px;width:64px"><span style="margin-left:-2.5px">IO: 1 -6</span></div><div class="io" style="left:365.4px;top:649.5px;width:60px;">IO: 1 -6</div><div class="io" style="left:389.2px;top:756.7px;">IO: 1 -6</div><div class="io" style="left:389.2px;top:785.9px;">IO: 1 -6</div><div class="io" style="left:1062.5px;top:475.8px;width:60px;">IO: 1 -6</div><div class="io" style="left:1062.5px;top:505.6px;width:60px;">IO: 1 -6</div><div class="io" style="left:1280px;top:454.1px;width:59.5px;">IO: 1 -6</div><div class="io" style="left:1280px;top:484.8px;width:62px;">IO: 1 -6</div>
<div class="card" style="top:201px;height:210px"></div>
<div class="card" style="top:434px;height:210px"></div>
<div class="card" style="top:666px;height:210px"></div>
<div class="card" style="top:899px;height:210px"></div>
<div class="ct" style="left:1542.4px;width:300px;text-align:center;top:207.2px;font-size:18px;line-height:21.6px;color:#666666">主机控制</div>
<div class="a" style="left:1406px;top:232.5px;width:520px;height:2px;background:#78aef2"></div>
<div class="ct" style="left:1385px;width:300px;text-align:center;top:248.2px;font-size:17.5px;line-height:21.0px;color:#666666">1#螺杆机</div>
<div class="ct" style="left:1572.5px;width:300px;text-align:center;top:248.2px;font-size:17.5px;line-height:21.0px;color:#666666">2#离心机</div>
<div class="ct" style="left:1871px;top:248.2px;font-size:17.5px;line-height:21.0px;color:#666666">3#螺杆机</div>
<div class="ct" style="left:1425px;top:296.1px;font-size:17.5px;line-height:21.0px;color:#666666">模式:</div>
<div class="ct" style="left:1610.4px;top:296.1px;font-size:17.5px;line-height:21.0px;color:#666666">模式:</div>
<div class="ct" style="left:1797px;top:296.1px;font-size:17.5px;line-height:21.0px;color:#666666">模式:</div>
<div class="ct" style="left:1425px;top:339.1px;font-size:17.5px;line-height:21.0px;color:#666666">启停:</div>
<div class="ct" style="left:1610.4px;top:339.1px;font-size:17.5px;line-height:21.0px;color:#666666">启停:</div>
<div class="ct" style="left:1823.3px;top:348.6px;font-size:17.5px;line-height:21.0px;color:#666666">启停:</div>
<div class="pill pb" style="left:1503px;top:289.5px;width:60px;height:25.5px;line-height:25.5px">制冷</div>
<div class="pill pb" style="left:1688px;top:289.5px;width:60px;height:25.5px;line-height:25.5px">制冷</div>
<div class="pill pg" style="left:1504px;top:333px;width:60px;height:25.80000000000001px;line-height:25.80000000000001px">停止</div>
<div class="pill pg" style="left:1689px;top:333px;width:60px;height:25.80000000000001px;line-height:25.80000000000001px">停止</div>
<div class="ct" style="left:1551.3px;width:300px;text-align:center;top:439.9px;font-size:18px;line-height:21.6px;color:#666666">冷冻泵控制</div>
<div class="a" style="left:1406px;top:466px;width:520px;height:2px;background:#78aef2"></div>
<div class="ct" style="left:1385.2px;width:300px;text-align:center;top:480.0px;font-size:17.5px;line-height:21.0px;color:#666666">1#冷冻泵</div>
<div class="ct" style="left:1387.5px;width:300px;text-align:center;top:527.1px;font-size:19.5px;line-height:23.4px;color:#666666">手动</div>
<div class="pill pg" style="left:1509.0px;top:567.3px;width:60.0px;height:25.300000000000068px;line-height:25.300000000000068px">停止</div>
<div class="ct" style="left:1508.8px;width:300px;text-align:center;top:480.0px;font-size:17.5px;line-height:21.0px;color:#666666">2#冷冻泵</div>
<div class="ct" style="left:1511.1px;width:300px;text-align:center;top:527.1px;font-size:19.5px;line-height:23.4px;color:#666666">手动</div>
<div class="pill pg" style="left:1633.2px;top:567.3px;width:60.0px;height:25.300000000000068px;line-height:25.300000000000068px">停止</div>
<div class="ct" style="left:1632px;width:300px;text-align:center;top:480.0px;font-size:17.5px;line-height:21.0px;color:#666666">3#冷冻泵</div>
<div class="ct" style="left:1634.3px;width:300px;text-align:center;top:527.1px;font-size:19.5px;line-height:23.4px;color:#666666">手动</div>
<div class="pill pg" style="left:1757.4px;top:567.3px;width:60.0px;height:25.300000000000068px;line-height:25.300000000000068px">停止</div>
<div class="ct" style="left:1867px;top:480.0px;font-size:17.5px;line-height:21.0px;color:#666666">4#冷冻泵</div>
<div class="ct" style="left:1414.7px;top:528.4px;font-size:17.5px;line-height:21.0px;color:#666666">手自动:</div>
<div class="ct" style="left:1424.4px;top:571.4px;font-size:17.5px;line-height:21.0px;color:#666666">启停:</div>
<div class="ct" style="left:1551.3px;width:300px;text-align:center;top:672.0px;font-size:18px;line-height:21.6px;color:#666666">冷却泵控制</div>
<div class="a" style="left:1406px;top:698px;width:520px;height:2px;background:#78aef2"></div>
<div class="ct" style="left:1385.2px;width:300px;text-align:center;top:711.9px;font-size:17.5px;line-height:21.0px;color:#666666">1#冷却泵</div>
<div class="ct" style="left:1387.5px;width:300px;text-align:center;top:759.0px;font-size:19.5px;line-height:23.4px;color:#666666">手动</div>
<div class="pill pg" style="left:1509.0px;top:798.4px;width:60.0px;height:25.0px;line-height:25.0px">停止</div>
<div class="ct" style="left:1508.8px;width:300px;text-align:center;top:711.9px;font-size:17.5px;line-height:21.0px;color:#666666">2#冷却泵</div>
<div class="ct" style="left:1511.1px;width:300px;text-align:center;top:759.0px;font-size:19.5px;line-height:23.4px;color:#666666">手动</div>
<div class="pill pg" style="left:1633.2px;top:798.4px;width:60.0px;height:25.0px;line-height:25.0px">停止</div>
<div class="ct" style="left:1632px;width:300px;text-align:center;top:711.9px;font-size:17.5px;line-height:21.0px;color:#666666">3#冷却泵</div>
<div class="ct" style="left:1634.3px;width:300px;text-align:center;top:759.0px;font-size:19.5px;line-height:23.4px;color:#666666">手动</div>
<div class="pill pg" style="left:1757.4px;top:798.4px;width:60.0px;height:25.0px;line-height:25.0px">停止</div>
<div class="ct" style="left:1867px;top:711.9px;font-size:17.5px;line-height:21.0px;color:#666666">4#冷却泵</div>
<div class="ct" style="left:1414.7px;top:760.2px;font-size:17.5px;line-height:21.0px;color:#666666">手自动:</div>
<div class="ct" style="left:1424.4px;top:803.2px;font-size:17.5px;line-height:21.0px;color:#666666">启停:</div>
<div class="ct" style="left:1551.3px;width:300px;text-align:center;top:905.3px;font-size:18px;line-height:21.6px;color:#666666">冷却塔控制</div>
<div class="a" style="left:1406px;top:930.6px;width:520px;height:2px;background:#78aef2"></div>
<div class="ct" style="left:1385.2px;width:300px;text-align:center;top:944.6px;font-size:17.5px;line-height:21.0px;color:#666666">1#冷却塔</div>
<div class="ct" style="left:1387.5px;width:300px;text-align:center;top:992.4px;font-size:19.5px;line-height:23.4px;color:#666666">手动</div>
<div class="pill pg" style="left:1509.0px;top:1032px;width:60.0px;height:25px;line-height:25px">停止</div>
<div class="ct" style="left:1508.8px;width:300px;text-align:center;top:944.6px;font-size:17.5px;line-height:21.0px;color:#666666">2#冷却塔</div>
<div class="ct" style="left:1511.1px;width:300px;text-align:center;top:992.4px;font-size:19.5px;line-height:23.4px;color:#666666">手动</div>
<div class="pill pg" style="left:1633.2px;top:1032px;width:60.0px;height:25px;line-height:25px">停止</div>
<div class="ct" style="left:1632px;width:300px;text-align:center;top:944.6px;font-size:17.5px;line-height:21.0px;color:#666666">3#冷却塔</div>
<div class="ct" style="left:1634.3px;width:300px;text-align:center;top:992.4px;font-size:19.5px;line-height:23.4px;color:#666666">手动</div>
<div class="pill pg" style="left:1757.4px;top:1032px;width:60.0px;height:25px;line-height:25px">停止</div>
<div class="ct" style="left:1867px;top:944.6px;font-size:17.5px;line-height:21.0px;color:#666666">4#冷却塔</div>
<div class="ct" style="left:1414.7px;top:993.6px;font-size:17.5px;line-height:21.0px;color:#666666">手自动:</div>
<div class="ct" style="left:1424.4px;top:1036.7px;font-size:17.5px;line-height:21.0px;color:#666666">启停:</div>
</div></div>

<svg class="a" style="left:1685px;top:760px" width="210" height="36" viewBox="1685 760 210 36">
<defs><linearGradient id="shirtg" x1="0" y1="0" x2="1" y2="1"><stop offset="0" stop-color="#ff6a3a"/><stop offset="0.5" stop-color="#b060e0"/><stop offset="1" stop-color="#40a0ff"/></linearGradient></defs>
<rect x="1706.5" y="767.5" width="183.5" height="24.8" fill="#fff" stroke="#a9c3e6" stroke-width="1"/>
<g transform="rotate(-14 1705 778)"><rect x="1691.5" y="764.5" width="27" height="27" rx="5" fill="#f25a1e"/></g>
<path d="M1712.5 770.5 Q1706 768.5 1699.5 771.5 Q1694.5 775 1700 777.5 L1708.5 779.5 Q1712 781 1708 783.5 Q1702 786 1697 784" stroke="#fff" stroke-width="3.2" fill="none" stroke-linecap="round"/>
<g fill="#1a6fd8">
<rect x="1727.5" y="775.5" width="13" height="7" rx="1" fill="none" stroke="#1a6fd8" stroke-width="2.2"/><rect x="1733" y="772.5" width="2.2" height="14"/>
<circle cx="1755.5" cy="778" r="1.6" fill="none" stroke="#1a6fd8" stroke-width="1.3"/><path d="M1761.5 779 Q1763.5 779 1762 784" stroke="#1a6fd8" stroke-width="2.2" fill="none" stroke-linecap="round"/>
<rect x="1778.5" y="772" width="6.5" height="11" rx="3.2"/><path d="M1776.5 779 Q1776.5 785 1781.7 785 Q1787 785 1787 779" stroke="#1a6fd8" stroke-width="1.3" fill="none"/><rect x="1781" y="785" width="1.4" height="2.5"/>
<rect x="1800" y="774.5" width="14.5" height="12" rx="2" fill="none" stroke="#1a6fd8" stroke-width="1.6"/>
<rect x="1802.5" y="777" width="2" height="1.8"/><rect x="1806" y="777" width="2" height="1.8"/><rect x="1809.5" y="777" width="2" height="1.8"/><rect x="1802.5" y="780.3" width="2" height="1.8"/><rect x="1806" y="780.3" width="2" height="1.8"/><rect x="1809.5" y="780.3" width="2" height="1.8"/><rect x="1803.5" y="783.3" width="7.5" height="1.6"/>
<rect x="1848" y="774" width="5.6" height="5.6" rx="1.6"/><rect x="1855.3" y="774" width="5.6" height="5.6" rx="1.6"/><rect x="1848" y="781.3" width="5.6" height="5.6" rx="1.6"/><rect x="1855.3" y="781.3" width="5.6" height="5.6" rx="1.6"/>
</g>
<path d="M1823.5 774 L1828 770.5 H1836 L1840.5 774 L1838.5 778 L1836.5 777.5 V788 H1827.5 V777.5 L1825.5 778Z" fill="url(#shirtg)"/>
<circle cx="1838.5" cy="771.5" r="2.6" fill="#f04a3a"/>
<circle cx="1878" cy="781" r="10" fill="#fff" stroke="#f0e4e4" stroke-width="0.8"/>
<path d="M1869.5 779 Q1876 774.5 1883 777 L1881 783 Q1875 785 1870 783Z" fill="#f07830"/>
<circle cx="1873.5" cy="780" r="1" fill="#222"/><circle cx="1879" cy="779.5" r="0.9" fill="#222"/>
<path d="M1886.5 774 L1887.5 776 L1889.5 777 L1887.5 778 L1886.5 780 L1885.5 778 L1883.5 777 L1885.5 776Z" fill="#ffd23a"/>
</svg>

</body></html>
